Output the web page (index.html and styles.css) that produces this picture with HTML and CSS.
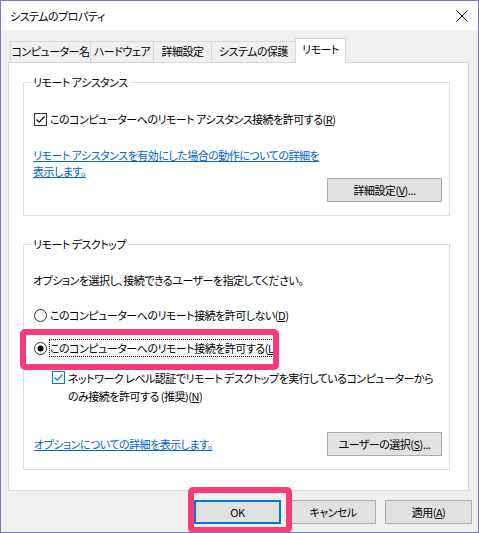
FILE: index.html
```html
<!DOCTYPE html>
<html lang="ja">
<head>
    <meta charset="UTF-8">
    <title>システムのプロパティ</title>
    <link rel="stylesheet" href="styles.css">
</head>
<body>
    <div class="window">
        <div class="titlebar">
            <span class="title">システムのプロパティ</span>
            <svg class="close" width="12" height="12" viewBox="0 0 12 12">
                <path d="M0.5 0.5 L11.5 11.5 M11.5 0.5 L0.5 11.5" stroke="#000" stroke-width="1" fill="none"/>
            </svg>
        </div>

        <div class="tabs">
            <div class="tab" style="width:81px">コンピューター名</div>
            <div class="tab" style="width:64px">ハードウェア</div>
            <div class="tab" style="width:59px">詳細設定</div>
            <div class="tab" style="width:85px">システムの保護</div>
            <div class="tab active" style="width:51px">リモート</div>
        </div>

        <div class="panel">
            <fieldset class="group group-assist">
                <legend>リモート アシスタンス</legend>
                <div class="option">
                    <svg class="box" width="13" height="13" viewBox="0 0 13 13">
                        <rect x="0.5" y="0.5" width="12" height="12" fill="#fff" stroke="#333"/>
                        <path d="M2.5 6.5 L5.2 9.2 L10.5 3.5" stroke="#000" stroke-width="1.2" fill="none"/>
                    </svg>
                    <span>このコンピューターへのリモート アシスタンス接続を許可する(<u>R</u>)</span>
                </div>
                <a class="link link-assist" href="#">リモート アシスタンスを有効にした場合の動作についての詳細を<br>表示します。</a>
                <div class="btn-row">
                    <button class="btn btn-wide">詳細設定(<u>V</u>)...</button>
                </div>
            </fieldset>

            <fieldset class="group group-desktop">
                <legend>リモート デスクトップ</legend>
                <p class="intro">オプションを選択し、接続できるユーザーを指定してください。</p>
                <div class="option radio-off">
                    <svg class="box" width="13" height="13" viewBox="0 0 13 13">
                        <circle cx="6.5" cy="6.5" r="6" fill="#fff" stroke="#333"/>
                    </svg>
                    <span>このコンピューターへのリモート接続を許可しない(<u>D</u>)</span>
                </div>
                <div class="option radio-on">
                    <svg class="box" width="13" height="13" viewBox="0 0 13 13">
                        <circle cx="6.5" cy="6.5" r="6" fill="#fff" stroke="#333"/>
                        <circle cx="6.5" cy="6.5" r="3" fill="#000"/>
                    </svg>
                    <span class="focused">このコンピューターへのリモート接続を許可する(<u>L</u>)</span>
                </div>
                <div class="option sub-option">
                    <svg class="box" width="13" height="13" viewBox="0 0 13 13">
                        <rect x="0.5" y="0.5" width="12" height="12" fill="#fff" stroke="#0078d7"/>
                        <path d="M2.5 6.5 L5.2 9.2 L10.5 3.5" stroke="#0078d7" stroke-width="1.2" fill="none"/>
                    </svg>
                    <span>ネットワーク レベル認証でリモート デスクトップを実行しているコンピューターから<br>のみ接続を許可する (推奨)(<u>N</u>)</span>
                </div>
                <div class="footer-row">
                    <a class="link" href="#">オプションについての詳細を表示します。</a>
                    <button class="btn btn-wide">ユーザーの選択(<u>S</u>)...</button>
                </div>
            </fieldset>
        </div>

        <div class="actions">
            <button class="btn btn-default">OK</button>
            <button class="btn">キャンセル</button>
            <button class="btn">適用(<u>A</u>)</button>
        </div>

        <div class="mark mark-radio"></div>
        <div class="mark mark-ok"></div>
    </div>
</body>
</html>
```

FILE: styles.css
```css
* {
    box-sizing: border-box;
}

body {
    margin: 0;
    font-family: "Noto Sans CJK JP", "Noto Sans", sans-serif;
    font-size: 11px;
    letter-spacing: -0.5px;
    font-feature-settings: "palt";
    color: #000;
    background: #fff;
}

.window {
    position: relative;
    width: 479px;
    height: 533px;
    border: 1px solid #7a7ac6;
    background: #f0f0f0;
    overflow: hidden;
}

.titlebar {
    height: 29px;
    background: #fff;
    display: flex;
    align-items: center;
    justify-content: space-between;
    padding: 0 10px 0 9px;
}

.title {
    line-height: 16px;
}

/* tabs */
.tabs {
    position: relative;
    z-index: 1;
    display: flex;
    align-items: flex-end;
    height: 32px;
    padding-left: 9px;
}

.tab {
    height: 21px;
    line-height: 19px;
    text-align: center;
    white-space: nowrap;
    border: 1px solid #d9d9d9;
    border-bottom: none;
    background: #f0f0f0;
    margin-left: -1px;
}

.tab:first-child {
    margin-left: 0;
}

.tab.active {
    height: 25px;
    line-height: 20px;
    background: #fff;
    margin-bottom: -1px;
}

.panel {
    margin-left: 7px;
    width: 461px;
    height: 429px;
    background: #fff;
    border: 1px solid #d9d9d9;
    padding: 11px 18px 0 14px;
}

/* group boxes */
.group {
    margin: 0;
    border: 1px solid #dcdcdc;
    padding: 0 7px 13px 10px;
    min-width: 0;
}

.group legend {
    padding: 0 2px;
    margin-left: -3px;
    line-height: 16px;
}

.group-desktop {
    margin-top: 20px;
}

.option {
    display: flex;
    align-items: center;
    gap: 3px;
    line-height: 16px;
    white-space: nowrap;
}

.box {
    flex-shrink: 0;
}

.group-assist .option {
    margin-top: 21px;
}

.link {
    color: #0066cc;
    text-decoration: underline;
    line-height: 16px;
}

.link-assist {
    display: block;
    margin-top: 20px;
    margin-left: -1px;
}

.btn-row {
    display: flex;
    justify-content: flex-end;
    margin-top: -1px;
}

.btn {
    font: inherit;
    font-feature-settings: "palt";
    letter-spacing: -0.5px;
    color: #000;
    height: 24px;
    width: 87px;
    padding: 0;
    background: #e1e1e1;
    border: 1px solid #adadad;
    line-height: 20px;
}

.btn-wide {
    width: 115px;
}

.btn-default {
    border: 2px solid #0078d7;
}

.intro {
    margin: 20px 0 0 -1px;
    line-height: 16px;
}

.radio-off {
    margin-top: 19px;
}

.radio-on {
    margin-top: 17px;
}

.focused {
    outline: 1px dotted #000;
    outline-offset: 0;
}

.sub-option {
    margin-top: 13px;
    padding-left: 18px;
    align-items: flex-start;
    line-height: 18px;
}

.sub-option .box {
    margin-top: 2px;
}

.footer-row {
    display: flex;
    align-items: center;
    justify-content: space-between;
    margin-top: 27px;
}

/* dialog buttons */
.actions {
    display: flex;
    justify-content: flex-end;
    gap: 9px;
    margin-top: 9px;
    padding-right: 6px;
}

.actions .btn:nth-child(2) {
    width: 86px;
}

/* annotation frames */
.mark {
    position: absolute;
    border: 6px solid #fc3a77;
    border-radius: 5px;
}

.mark-radio {
    left: 19px;
    top: 328px;
    width: 259px;
    height: 41px;
}

.mark-ok {
    left: 187px;
    top: 486px;
    width: 104px;
    height: 46px;
}
```
